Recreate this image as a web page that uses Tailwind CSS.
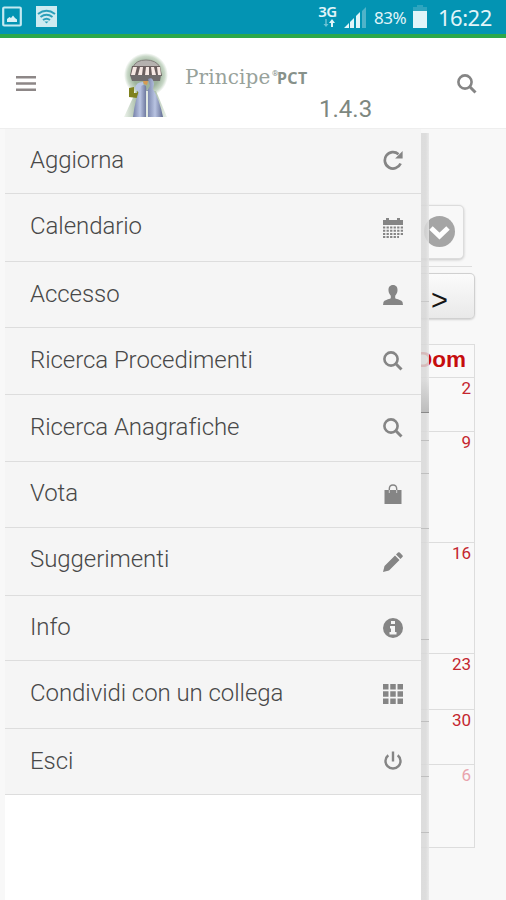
<!DOCTYPE html>
<html lang="it">
<head>
    <meta charset="UTF-8">
    <meta name="viewport" content="width=device-width, initial-scale=1.0">
    <script src="https://cdn.jsdelivr.net/npm/@tailwindcss/browser@4"></script>
    <title>Principe PCT</title>
</head>
<body class="h-[900px] w-[506px] overflow-hidden bg-[#f8f8f8] font-['Roboto',sans-serif]">

    <!-- status bar -->
    <div class="flex h-[38px] justify-between border-b-4 border-[#2ba84a] bg-[#0394b3] text-[#e2f5f9]">
        <div class="flex items-start gap-[14px] pt-[6px] pl-[2px]">
            <svg class="h-[21px] w-5" viewBox="0 0 20 21" fill="none">
                <rect x="1.2" y="1.5" width="17.6" height="18" rx="1" stroke="#c3e9f1" stroke-width="2.2"/>
                <path d="M5 16v-3l2.500-2 1.500 1 2-2.500 2 2.500 2 1.500V16z" fill="#d8f1f6"/>
            </svg>
            <svg class="h-[21px] w-[21px]" viewBox="0 0 21 21" fill="none" stroke="#2a9fb9" stroke-width="2">
                <rect width="21" height="21" fill="#cdebf1" stroke="none"/>
                <path d="M2 8q8.500-6.500 17 0M4.500 11q6-4.500 12 0M7 14q3.500-2.600 7 0"/>
                <path d="M8.500 15.500h4l-2 2z" fill="#2a9fb9" stroke="none"/>
            </svg>
        </div>
        <div class="flex items-start pr-[14px] font-['Noto_Sans',sans-serif]">
            <div class="flex w-5 flex-col items-center pt-[3px]">
                <span class="-ml-[3px] text-[15px] leading-4 font-semibold tracking-[-0.4px]">3G</span>
                <svg class="h-2 w-3" viewBox="0 0 12 8"><path d="M2.300 0h1.400v5H5.500L3 8 .5 5h1.800z" fill="#6fc3d5"/><path d="M8 8h2V4h2L9 0 6 4h2z" fill="#e2f5f9"/></svg>
            </div>
            <svg class="mt-[6px] ml-[5px] h-[22px] w-[23px]" viewBox="0 0 23 22">
                <path d="M0 22l5-5v5zM6 16l4-4v10H6zM12 10l4-4v16h-4z" fill="#e2f5f9"/>
                <path d="M18 5l4-4v21h-4z" fill="#4fb3c9"/>
            </svg>
            <span class="mt-[7px] ml-[7px] w-[36px] text-[17px] leading-[22px] tracking-[-0.5px]">83%</span>
            <svg class="mt-[5px] ml-[3px] h-[23px] w-[14px]" viewBox="0 0 14 23"><path d="M4 0h6v2H4zM0 2h14v4H0z" fill="#2ea5bf"/><path d="M0 6h14v17H0z" fill="#e2f5f9"/></svg>
            <span class="mt-[4px] ml-[11px] w-[54px] text-[22px] leading-[27px] tracking-[-0.5px]">16:22</span>
        </div>
    </div>

    <!-- header -->
    <header class="flex h-[91px] border-b border-[#eeeeee] bg-white">
        <svg class="mt-[38px] ml-4 h-[15px] w-5" viewBox="0 0 20 15" fill="#8d8787"><path d="M0 0h20v2.600H0zM0 6.200h20v2.600H0zM0 12.400h20V15H0z"/></svg>
        <svg class="mt-[15px] ml-[88px] h-[66px] w-[44px]" viewBox="0 0 44 66">
            <defs>
                <radialGradient id="halo"><stop offset="0.600" stop-color="#9db39c"/><stop offset="0.850" stop-color="#c9d8c8"/><stop offset="1" stop-color="#ffffff"/></radialGradient>
                <linearGradient id="robe"><stop offset="0" stop-color="#7580a8"/><stop offset="0.500" stop-color="#b9c4e2"/><stop offset="1" stop-color="#626c93"/></linearGradient>
                <linearGradient id="base"><stop offset="0" stop-color="#eef4ed"/><stop offset="0.300" stop-color="#a9bda8"/><stop offset="0.700" stop-color="#a9bda8"/><stop offset="1" stop-color="#eef4ed"/></linearGradient>
            </defs>
            <circle cx="22" cy="22" r="22" fill="url(#halo)"/>
            <path d="M12 38h20l11 26H0z" fill="url(#base)"/>
            <path d="M9 14Q12 7 22 7t14 7z" fill="#b5b1af" stroke="#85807e"/>
            <path d="M8 13h28l2 10H6z" fill="#6b5f5f"/>
            <path d="M9 14h4l-2 8H7zM16 14h3l-1 8h-4zM22 14h3v8h-4zM27 14h3l2 8h-4zM33 14h3l1 8h-3z" fill="#f6e8e4"/>
            <path d="M6 22h31l-1 6H8z" fill="#706c6d"/>
            <path d="M5 35l5-1v6h3l1-5 4 2-5 8-8-1z" fill="#7f811d"/>
            <path d="M11 35q1-6 8-6l1 5q-4 1-5 6z" fill="#b8c5e4"/>
            <path d="M17 33q3-2 5 0l1 12-1 19H9q2-18 8-31z" fill="url(#robe)"/>
            <path d="M23 38l3-5-2-7q5-3 6 5l-1 5q7 12 10 28H24z" fill="url(#robe)"/>
            <path d="M19 28h5l-1 4-3-1z" fill="#d79a52"/>
            <path d="M22 38h2v26h-2z" fill="#e1e9e2"/>
        </svg>
        <div class="flex w-[203px] flex-col pt-[24px] pl-[17px] text-[#87918a]">
            <div class="flex h-[30px] items-baseline leading-[30px]">
                <span class="w-[87px] font-['DejaVu_Serif',serif] text-[20px] tracking-[0.1px] text-[#98a29b]">Principe</span>
                <span class="w-[5px] -translate-y-[8px] text-[8px] leading-none">®</span>
                <span class="font-['Noto_Sans',sans-serif] text-[16px] leading-none font-bold tracking-[0.4px] text-[#87918a]">PCT</span>
            </div>
            <span class="pl-[134px] text-[24px] leading-[34px] text-[#7d8780]">1.4.3</span>
        </div>
        <svg class="mt-[36px] ml-[86px] h-5 w-5" viewBox="0 0 20 20" fill="none" stroke="#858585"><circle cx="8" cy="8" r="6.600" stroke-width="2.600"/><path d="M12.800 12.800l5.700 5.700" stroke-width="3"/></svg>
    </header>

    <main class="flex h-[771px] pl-[5px]">

        <!-- drawer -->
        <nav class="w-[416px] shrink-0 bg-white">
            <ul class="grid grid-rows-[65px_68px_66px_67px_67px_66px_68px_65px_68px_66px] bg-[#f5f5f5] text-[24px] font-light tracking-[-0.06px] text-[#484848] *:flex *:items-center *:justify-between *:border-b *:border-[#dddddd] *:pr-[18px] *:pb-[2px] *:pl-[25px]">
                <li><span>Aggiorna</span>
                    <svg class="h-5 w-5" viewBox="0 0 20 20"><path d="M15.500 4.200A8.200 8.200 0 1 0 17.600 13.500" fill="none" stroke="#858585" stroke-width="2.700"/><path d="M19.600 1v7.500h-7.500z" fill="#858585"/></svg>
                </li>
                <li><span class="-translate-y-px">Calendario</span>
                    <svg class="h-5 w-5 translate-y-px" viewBox="0 0 20 20" fill="#858585"><path d="M0 2h3V0h3v2h8V0h3v2h3v5H0z"/><path d="M0 9.500h20M0 12.700h20M0 15.900h20M0 19h16" stroke="#858585" stroke-width="2" stroke-dasharray="2.300 1.240"/></svg>
                </li>
                <li><span>Accesso</span>
                    <svg class="h-5 w-5 translate-y-px" viewBox="0 0 20 20" fill="#858585"><path d="M10 0c3.200 0 4.700 2.300 4.500 5.500-.1 2.500-1.300 4-2.300 5.200v2.600c2 1.200 6 1.500 7.300 3.700L20 20H0l.5-3c1.300-2.200 5.300-2.500 7.300-3.700v-2.600C6.800 9.500 5.600 8 5.500 5.500 5.300 2.300 6.800 0 10 0z"/></svg>
                </li>
                <li><span>Ricerca Procedimenti</span>
                    <svg class="h-5 w-5 translate-y-px" viewBox="0 0 20 20" fill="none" stroke="#858585"><circle cx="8" cy="8" r="6.600" stroke-width="2.600"/><path d="M12.800 12.800l5.700 5.700" stroke-width="3"/></svg>
                </li>
                <li><span>Ricerca Anagrafiche</span>
                    <svg class="h-5 w-5 translate-y-px" viewBox="0 0 20 20" fill="none" stroke="#858585"><circle cx="8" cy="8" r="6.600" stroke-width="2.600"/><path d="M12.800 12.800l5.700 5.700" stroke-width="3"/></svg>
                </li>
                <li><span class="-translate-y-px">Vota</span>
                    <svg class="h-5 w-5" viewBox="0 0 20 20"><path d="M1.500 6h17v14h-17z" fill="#858585"/><path d="M6.300 9V5q0-4 3.700-4t3.700 4v4" fill="none" stroke="#858585" stroke-width="1.400"/><path d="M6.300 6v3M13.700 6v3" stroke="#d0d0d0"/></svg>
                </li>
                <li><span class="-translate-y-[2px]">Suggerimenti</span>
                    <svg class="h-5 w-5 translate-y-px" viewBox="0 0 20 20" fill="#858585"><path d="M0 20l1.500-6L12 3.500 16.500 8 6 18.500zM13 2.500L15 .6q.8-.8 1.700 0l2.700 2.700q.8.900 0 1.700L17.500 7z"/></svg>
                </li>
                <li><span>Info</span>
                    <svg class="h-5 w-5 translate-y-px" viewBox="0 0 20 20"><circle cx="10" cy="10" r="10" fill="#858585"/><path d="M8 3h4v3H8zM7 8h5v6h1.500v2.500h-7V14H8v-3.500H7z" fill="#f5f5f5"/></svg>
                </li>
                <li><span class="-translate-y-px">Condividi con un collega</span>
                    <svg class="h-5 w-5" viewBox="0 0 20 20" fill="#858585"><path d="M0 0h5.500v5.500H0zM7.250 0h5.500v5.500h-5.500zM14.500 0H20v5.500h-5.500zM0 7.250h5.500v5.500H0zM7.250 7.250h5.500v5.500h-5.500zM14.500 7.250H20v5.500h-5.500zM0 14.500h5.500V20H0zM7.250 14.500h5.500V20h-5.500zM14.500 14.500H20V20h-5.500z"/></svg>
                </li>
                <li><span>Esci</span>
                    <svg class="h-5 w-5" viewBox="0 0 20 20" fill="none" stroke="#858585" stroke-width="2.400"><path d="M5.300 4.200a7.500 7.500 0 1 0 9.400 0M10 .5v10"/></svg>
                </li>
            </ul>
        </nav>

        <!-- calendar page behind the drawer -->
        <section class="relative w-[85px] overflow-hidden">
            <div class="mt-[76px] flex h-[54px] w-[43px] items-center rounded-r-[5px] border border-l-0 border-[#dcdcdc] bg-[#f8f8f8] pl-[3px] shadow-[0_1px_3px_rgba(0,0,0,0.2)]">
                <svg class="h-[31px] w-[31px] shrink-0 -translate-y-px" viewBox="0 0 31 31"><circle cx="15.500" cy="15.500" r="15.500" fill="#a5a5a5"/><path d="M7 12l8.500 8 8.500-8" fill="none" stroke="#ffffff" stroke-width="5"/></svg>
            </div>
            <div class="mt-[7px] h-px w-[51px] bg-[#dddddd]"></div>
            <div class="mt-[6px] h-[46px] w-[54px] rounded-r-[5px] border border-l-0 border-[#d0d0d0] bg-linear-to-b from-[#fbfbfb] to-[#e9e9e9] pl-[10px] font-['Liberation_Sans',sans-serif] text-[29px] leading-[52px] text-[#151515] shadow-[0_1px_2px_rgba(0,0,0,0.15)]">&gt;</div>
            <div class="mt-[25px] grid w-[54px] grid-cols-[minmax(0,1fr)] grid-rows-[33px_54px_111px_111px_56px_55px_83px] border-t border-r border-[#dddddd] bg-[#f9f9f9] text-right text-[17px] leading-[21px] text-[#c4262e] *:border-b *:border-[#dddddd] *:pr-[3px]">
                <div class="flex items-center justify-end pr-[8px]! pb-[3px] font-['Liberation_Sans',sans-serif] text-[22.5px] font-bold text-[#c60d0d]">Dom</div>
                <div>2</div>
                <div>9</div>
                <div>16</div>
                <div>23</div>
                <div>30</div>
                <div class="text-[#e9a3ac]">6</div>
            </div>

            <!-- drawer shadow, with the row lines showing through -->
            <div class="absolute top-[4px] left-0 h-[767px] w-2 bg-linear-to-r from-[#d8d8d8]/85 from-60% to-[#e6e6e6]/85">
                <div class="absolute top-[168px] h-px w-full bg-[#c8c8c8]"></div>
                <div class="absolute top-[245px] h-[35px] w-full border-b border-[#888888] bg-linear-to-b from-transparent to-[#bdbdbd]"></div>
                <div class="absolute top-[307px] h-px w-full bg-[#bfbfbf]"></div>
                <div class="absolute top-[340px] h-px w-full bg-[#bfbfbf]"></div>
                <div class="absolute top-[395px] h-px w-full bg-[#bfbfbf]"></div>
                <div class="absolute top-[506px] h-px w-full bg-[#bfbfbf]"></div>
                <div class="absolute top-[588px] h-px w-full bg-[#bfbfbf]"></div>
                <div class="absolute top-[643px] h-px w-full bg-[#bfbfbf]"></div>
                <div class="absolute top-[699px] h-px w-full bg-[#bfbfbf]"></div>
            </div>
        </section>
    </main>

</body>
</html>
